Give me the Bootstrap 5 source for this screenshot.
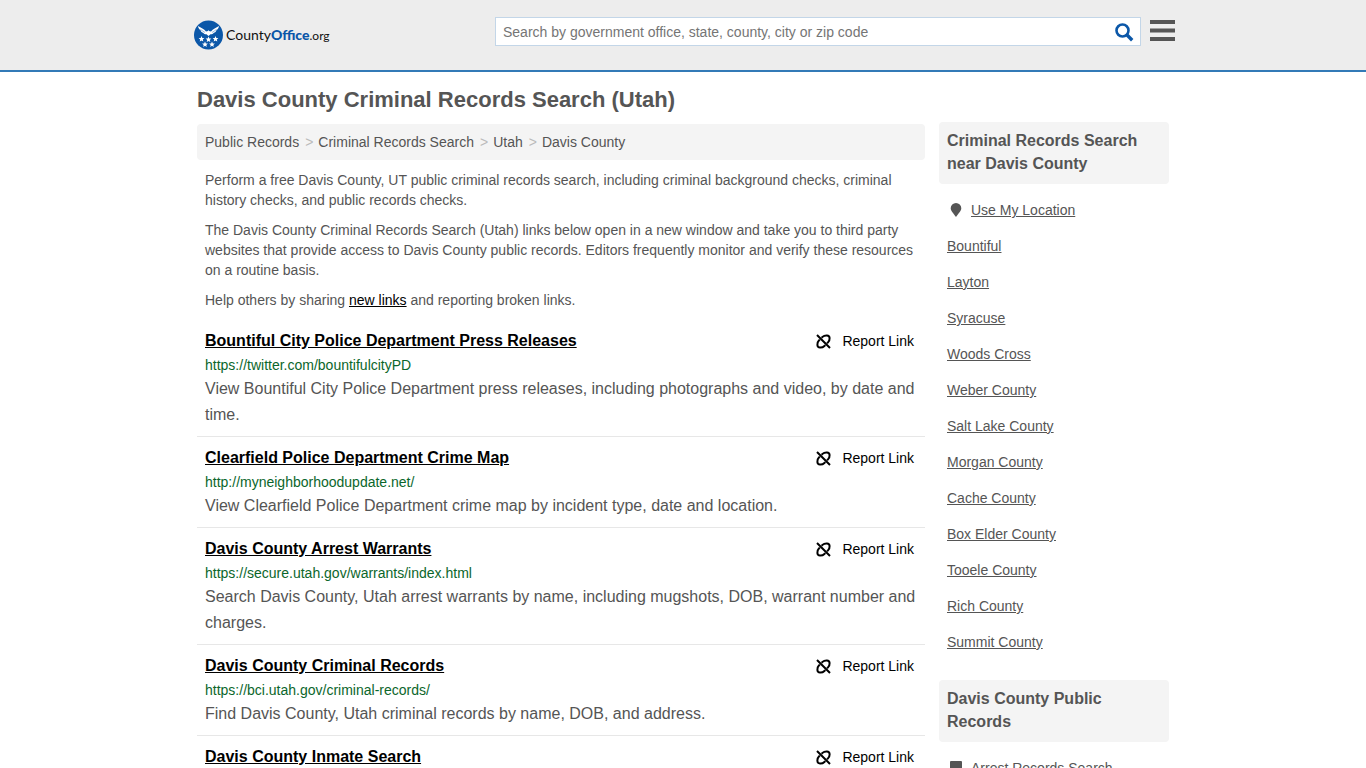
<!DOCTYPE html>
<html lang="en">
<head>
<meta charset="utf-8">
<meta name="viewport" content="width=device-width, initial-scale=1">
<title>Davis County Criminal Records Search (Utah)</title>
<link href="https://cdn.jsdelivr.net/npm/bootstrap@5.3.0/dist/css/bootstrap.min.css" rel="stylesheet">
<style>
body { font-family: "Liberation Sans", Arial, sans-serif; font-size: 14px; line-height: 20px; color: #555; background: #fff; }
a { color: #555; }
.wrap { max-width: 980px; }
.site-header { background: #ededed; border-bottom: 2px solid #337ab7; }
.site-header .wrap { max-width: 986px; min-height: 70px; }
.brand { gap: 2px; font-family: Lato, sans-serif; font-size: 14px; color: #111; }
.brand b { color: #0b57a8; font-weight: 900; }
.brand .tld { font-size: 12px; }
.search { max-width: 646px; height: 29px; background: #fff; border: 1px solid #c3d6e8; margin-top: 17px; }
.search .form-control { font-size: 14px; line-height: 20px; padding: 3px 7px; box-shadow: none; }
.search .form-control::placeholder { color: #757575; }
.menu-btn { margin-top: 20px; }
h1 { font-size: 22px; line-height: 24px; }
.columns { gap: 14px; }
.side { width: 230px; margin-top: 34px; }
.panel-bg { background: #f4f4f4; border-radius: 4px; }
.breadcrumb { --bs-breadcrumb-divider: ">"; --bs-breadcrumb-divider-color: #bbb; --bs-breadcrumb-item-padding-x: 6px; }
.breadcrumb-item + .breadcrumb-item::before { padding-right: 5px; }
.intro { padding: 10px 8px 0; }
.intro p { margin-bottom: 10px; }
.record { border-bottom: 1px solid #e7e7e7; padding: 9px 8px 8px; }
.record h2 { font-size: 16px; line-height: 24px; margin-bottom: 0; }
.record cite { color: #0b662b; margin: 2px 0 1px; }
.record p { font-size: 16px; line-height: 26px; }
.report { gap: 11px; margin-right: 3px; }
.side h2 { font-size: 16px; line-height: 23px; padding: 7px 8px 9px; }
.side li { padding: 8px; }
.side li.with-icon { gap: 6px; }
.side ul { margin-bottom: 20px; }
</style>
</head>
<body>
<header class="site-header">
  <div class="wrap container-fluid px-0 d-flex align-items-start">
    <a href="#" class="brand d-flex align-items-center text-decoration-none mt-3 pt-1 ms-1 me-auto" aria-label="CountyOffice.org">
      <svg width="30" height="30" viewBox="0 0 30 30" aria-hidden="true">
        <circle cx="14.500" cy="15" r="14.500" fill="#0b57a8"/>
        <path d="M4 6c3 2 6 2.500 8 5.500l2-.5.500-1 .5 1 2 .5C19 8.500 22 8 25 6c-.3 2-1.200 3.400-2.600 4.200-.4 1.400-1.300 2.200-2.600 2.500-.8 1.100-2 1.600-3.300 1.500L14.500 16l-2-1.800c-1.300.1-2.500-.4-3.300-1.500-1.300-.3-2.200-1.100-2.600-2.500C5.200 9.400 4.300 8 4 6z" fill="#fff"/>
        <path d="M6.500 9.500l4.500 3M22.500 9.500l-4.500 3" stroke="#0b57a8" stroke-width=".4"/>
        <defs><path id="star" d="M0-2.900L.85-1 2.900-.9 1.300.5 1.800 2.500 0 1.400-1.800 2.500-1.300.5-2.900-.9-.85-1z" fill="#fff"/></defs>
        <use href="#star" x="7.500" y="19"/><use href="#star" x="14.500" y="19.500"/><use href="#star" x="21.500" y="19"/>
        <use href="#star" x="11" y="24.400"/><use href="#star" x="18" y="24.400"/>
      </svg>
      <span>County<b>Office</b><span class="tld">.org</span></span>
    </a>
    <form class="search d-flex align-items-center flex-grow-1 mx-2" role="search">
      <input type="search" class="form-control border-0 bg-transparent rounded-0" placeholder="Search by government office, state, county, city or zip code" aria-label="Search">
      <button type="submit" class="btn p-0 border-0 d-flex me-1" aria-label="Search">
        <svg width="24" height="24" viewBox="0 0 24 24" fill="none" stroke="#0b57a8"><circle cx="10.500" cy="10.500" r="6" stroke-width="2.600"/><path d="M14.800 14.800l5.400 5.400" stroke-width="3.400"/></svg>
      </button>
    </form>
    <button type="button" class="menu-btn btn p-0 border-0 d-flex" aria-label="Menu">
      <svg width="27" height="22" viewBox="0 0 27 22" fill="#555"><path d="M1 0h25v4H1zM1 8.500h25v4H1zM1 17h25v4H1z"/></svg>
    </button>
  </div>
</header>

<svg class="d-none" aria-hidden="true">
  <symbol id="unlink" viewBox="0 0 15 15"><path d="M1 1l13 13M5.600 3.800l.9-.9C8.200 1.200 9.300 1.300 11 1.400c1.900.1 2.500.9 2.600 2.600.1 1.700.1 2.700-1.600 4.400l-.9.9M3.800 5.600l-.9.900C1.200 8.200 1.300 9.300 1.400 11c.1 1.900.9 2.500 2.600 2.600 1.700.1 2.700.1 4.400-1.600l.9-.9" fill="none" stroke="#000" stroke-width="2"/></symbol>
</svg>

<div class="wrap columns container-fluid px-1 d-flex">
  <main class="flex-grow-1">
    <h1 class="fw-bold mt-3 mb-2 pb-1">Davis County Criminal Records Search (Utah)</h1>
    <nav aria-label="breadcrumb" class="panel-bg p-2">
      <ol class="breadcrumb mb-0">
        <li class="breadcrumb-item"><a href="#" class="text-decoration-none">Public Records</a></li>
        <li class="breadcrumb-item"><a href="#" class="text-decoration-none">Criminal Records Search</a></li>
        <li class="breadcrumb-item"><a href="#" class="text-decoration-none">Utah</a></li>
        <li class="breadcrumb-item"><a href="#" class="text-decoration-none">Davis County</a></li>
      </ol>
    </nav>
    <div class="intro">
      <p>Perform a free Davis County, UT public criminal records search, including criminal background checks, criminal history checks, and public records checks.</p>
      <p>The Davis County Criminal Records Search (Utah) links below open in a new window and take you to third party websites that provide access to Davis County public records. Editors frequently monitor and verify these resources on a routine basis.</p>
      <p>Help others by sharing <a href="#" class="text-black">new links</a> and reporting broken links.</p>
    </div>
    <article class="record">
      <div class="d-flex justify-content-between"><h2 class="fw-bold"><a href="#" class="text-black">Bountiful City Police Department Press Releases</a></h2><a href="#" class="report text-black text-decoration-none d-flex align-items-center"><svg width="15" height="15"><use href="#unlink"/></svg><span>Report Link</span></a></div>
      <cite class="d-block fst-normal">https://twitter.com/bountifulcityPD</cite>
      <p class="mb-0">View Bountiful City Police Department press releases, including photographs and video, by date and time.</p>
    </article>
    <article class="record">
      <div class="d-flex justify-content-between"><h2 class="fw-bold"><a href="#" class="text-black">Clearfield Police Department Crime Map</a></h2><a href="#" class="report text-black text-decoration-none d-flex align-items-center"><svg width="15" height="15"><use href="#unlink"/></svg><span>Report Link</span></a></div>
      <cite class="d-block fst-normal">http://myneighborhoodupdate.net/</cite>
      <p class="mb-0">View Clearfield Police Department crime map by incident type, date and location.</p>
    </article>
    <article class="record">
      <div class="d-flex justify-content-between"><h2 class="fw-bold"><a href="#" class="text-black">Davis County Arrest Warrants</a></h2><a href="#" class="report text-black text-decoration-none d-flex align-items-center"><svg width="15" height="15"><use href="#unlink"/></svg><span>Report Link</span></a></div>
      <cite class="d-block fst-normal">https://secure.utah.gov/warrants/index.html</cite>
      <p class="mb-0">Search Davis County, Utah arrest warrants by name, including mugshots, DOB, warrant number and charges.</p>
    </article>
    <article class="record">
      <div class="d-flex justify-content-between"><h2 class="fw-bold"><a href="#" class="text-black">Davis County Criminal Records</a></h2><a href="#" class="report text-black text-decoration-none d-flex align-items-center"><svg width="15" height="15"><use href="#unlink"/></svg><span>Report Link</span></a></div>
      <cite class="d-block fst-normal">https://bci.utah.gov/criminal-records/</cite>
      <p class="mb-0">Find Davis County, Utah criminal records by name, DOB, and address.</p>
    </article>
    <article class="record border-0 pb-0">
      <div class="d-flex justify-content-between"><h2 class="fw-bold"><a href="#" class="text-black">Davis County Inmate Search</a></h2><a href="#" class="report text-black text-decoration-none d-flex align-items-center"><svg width="15" height="15"><use href="#unlink"/></svg><span>Report Link</span></a></div>
    </article>
  </main>
  <aside class="side flex-shrink-0 pt-3">
    <h2 class="panel-bg fw-bold mb-2">Criminal Records Search near Davis County</h2>
    <ul class="list-unstyled">
      <li class="with-icon d-flex align-items-center"><svg width="18" height="18" viewBox="0 0 18 18" class="flex-shrink-0" aria-hidden="true"><path d="M9 2a5.300 5.300 0 0 1 5.300 5.300C14.300 10 11.500 12.500 9 16 6.500 12.500 3.700 10 3.700 7.300A5.300 5.300 0 0 1 9 2z" fill="#555"/></svg><a href="#">Use My Location</a></li>
      <li><a href="#">Bountiful</a></li>
      <li><a href="#">Layton</a></li>
      <li><a href="#">Syracuse</a></li>
      <li><a href="#">Woods Cross</a></li>
      <li><a href="#">Weber County</a></li>
      <li><a href="#">Salt Lake County</a></li>
      <li><a href="#">Morgan County</a></li>
      <li><a href="#">Cache County</a></li>
      <li><a href="#">Box Elder County</a></li>
      <li><a href="#">Tooele County</a></li>
      <li><a href="#">Rich County</a></li>
      <li><a href="#">Summit County</a></li>
    </ul>
    <h2 class="panel-bg fw-bold mb-2">Davis County Public Records</h2>
    <ul class="list-unstyled mb-0">
      <li class="with-icon d-flex align-items-center pb-0"><svg width="18" height="18" viewBox="0 0 18 18" class="flex-shrink-0" aria-hidden="true"><path d="M4 2h10a1 1 0 0 1 1 1v12H3V3a1 1 0 0 1 1-1z" fill="#555"/></svg><a href="#">Arrest Records Search</a></li>
    </ul>
  </aside>
</div>
<script src="https://cdn.jsdelivr.net/npm/bootstrap@5.3.0/dist/js/bootstrap.bundle.min.js"></script>
</body>
</html>
